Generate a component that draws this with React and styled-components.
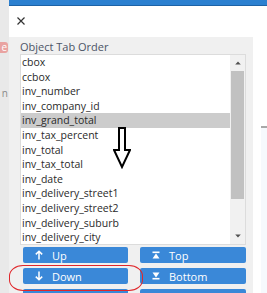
import React from 'react'
import styled, { createGlobalStyle } from 'styled-components'

const fields = [
  'cbox',
  'ccbox',
  'inv_number',
  'inv_company_id',
  'inv_grand_total',
  'inv_tax_percent',
  'inv_total',
  'inv_tax_total',
  'inv_date',
  'inv_delivery_street1',
  'inv_delivery_street2',
  'inv_delivery_suburb',
  'inv_delivery_city',
  'inv_delivery_state',
]

const UpIcon = () => (
  <svg width="8" height="10" viewBox="0 0 8 10">
    <path d="M4 9.5V1.2M0.8 4.4L4 1.2l3.2 3.2" fill="none" stroke="#fff" strokeWidth="1.5" />
  </svg>
)

const DownIcon = () => (
  <svg width="8" height="10" viewBox="0 0 8 10">
    <path d="M4 0.5v8.3M0.8 5.6L4 8.8l3.2-3.2" fill="none" stroke="#fff" strokeWidth="1.5" />
  </svg>
)

const TopIcon = () => (
  <svg width="8" height="8" viewBox="0 0 8 8">
    <rect x="0.5" y="0.5" width="7" height="1.6" fill="#fff" />
    <path d="M4 2.6L7.5 7.5H0.5z" fill="#fff" />
  </svg>
)

const BottomIcon = () => (
  <svg width="8" height="8" viewBox="0 0 8 8">
    <path d="M0.5 0.5h7L4 5.4z" fill="#fff" />
    <rect x="0.5" y="5.9" width="7" height="1.6" fill="#fff" />
  </svg>
)

function App() {
  return (
    <>
      <GlobalStyle />
      <Page>
        <LeftStrip>
          <CutButton>e</CutButton>
          <CutText>n</CutText>
        </LeftStrip>
        <Dialog>
          <TopBar />
          <CloseRow>
            <svg width="8" height="8" viewBox="0 0 8 8">
              <path d="M0.5 0.5l7 7M7.5 0.5l-7 7" stroke="#333" strokeWidth="1.2" />
            </svg>
          </CloseRow>
          <Content>
            <Panel>
              <Label>Object Tab Order</Label>
              <ListBox>
                <Items>
                  {fields.map((f, i) => (
                    <Item key={f} selected={i === 4}>{f}</Item>
                  ))}
                </Items>
                <ScrollBar>
                  <ScrollArrow>
                    <svg width="6" height="4" viewBox="0 0 6 4"><path d="M3 0.5L5.8 3.5H0.2z" fill="#505050" /></svg>
                  </ScrollArrow>
                  <Track>
                    <Thumb />
                  </Track>
                  <ScrollArrow>
                    <svg width="6" height="4" viewBox="0 0 6 4"><path d="M0.2 0.5h5.6L3 3.5z" fill="#505050" /></svg>
                  </ScrollArrow>
                </ScrollBar>
                <BigArrow width="18" height="42" viewBox="0 0 18 42">
                  <path d="M6 1h6v22h5L9 40 1 23h5z" fill="#fff" stroke="#000" strokeWidth="2" />
                </BigArrow>
              </ListBox>
              <Buttons>
                <Button><Ico><UpIcon /></Ico>Up</Button>
                <Button><Ico><TopIcon /></Ico>Top</Button>
                <Button><Ico><DownIcon /></Ico>Down</Button>
                <Button><Ico><BottomIcon /></Ico>Bottom</Button>
                <Button />
                <Button />
                <Circle />
              </Buttons>
            </Panel>
            <Gutter>
              <Ghost />
            </Gutter>
          </Content>
        </Dialog>
      </Page>
    </>
  )
}

export default App

const GlobalStyle = createGlobalStyle`
  html, body {
    margin: 0;
    padding: 0;
    background: #fff;
    overflow: hidden;
  }
  body {
    font-family: "Open Sans", "Noto Sans", sans-serif;
  }
`

const Page = styled.div`
  display: flex;
  width: 267px;
  height: 293px;
  overflow: hidden;
`

const LeftStrip = styled.div`
  width: 9px;
  flex-shrink: 0;
  background: #e9e9e9;
  overflow: hidden;
  padding-top: 42px;
  box-sizing: border-box;
`

const CutButton = styled.div`
  width: 8px;
  height: 11px;
  border-radius: 0 3px 3px 0;
  background: #e9a3a1;
  color: #fff;
  font-size: 10px;
  line-height: 10px;
  text-align: right;
  padding-right: 1px;
  box-sizing: border-box;
`

const CutText = styled.div`
  margin-top: 34px;
  width: 8px;
  font-size: 10px;
  line-height: 12px;
  color: #8a8a8a;
  text-align: right;
`

const Dialog = styled.div`
  flex: 1;
  display: flex;
  flex-direction: column;
  background: #fff;
  min-height: 0;
`

const TopBar = styled.div`
  flex-shrink: 0;
  height: 5px;
  background: #2c80d0;
  border-bottom: 1px solid #1d62a6;
`

const CloseRow = styled.div`
  flex-shrink: 0;
  height: 31px;
  padding: 11px 0 0 8px;
  box-sizing: border-box;
  display: flex;
  align-items: flex-start;
`

const Content = styled.div`
  flex: 1;
  display: flex;
  min-height: 0;
`

const Panel = styled.div`
  width: 244px;
  flex-shrink: 0;
  background: #f0f0f0;
  padding: 2px 7px 0 11px;
  box-sizing: border-box;
`

const Label = styled.div`
  font-size: 11px;
  line-height: 15px;
  color: #4c5466;
`

const ListBox = styled.div`
  position: relative;
  display: flex;
  height: 191px;
  background: #fff;
  border: 1px solid #dcdcdc;
  box-sizing: border-box;
  overflow: hidden;
`

const Items = styled.div`
  flex: 1;
  overflow: hidden;
`

const Item = styled.div`
  height: 14.6px;
  line-height: 14.6px;
  padding-left: 1px;
  font-size: 10.5px;
  color: #2a2a2a;
  white-space: nowrap;
  background: ${p => (p.selected ? '#cccccc' : 'transparent')};
`

const ScrollBar = styled.div`
  width: 15px;
  display: flex;
  flex-direction: column;
  background: #f1f1f1;
`

const ScrollArrow = styled.div`
  height: 16px;
  display: flex;
  align-items: center;
  justify-content: center;
`

const Track = styled.div`
  flex: 1;
  padding-bottom: 29px;
  display: flex;
`

const Thumb = styled.div`
  flex: 1;
  margin: 0 1px;
  background: #c1c1c1;
`

const BigArrow = styled.svg`
  position: absolute;
  left: 92px;
  top: 72px;
`

const Buttons = styled.div`
  position: relative;
  display: grid;
  grid-template-columns: 105px 106px;
  column-gap: 12px;
  row-gap: 5px;
  padding: 2px 0 0 3px;
`

const Button = styled.div`
  height: 16px;
  display: flex;
  align-items: center;
  padding-left: 12px;
  background: #3a88d8;
  border-radius: 2px;
  color: #fff;
  font-size: 11px;
`

const Ico = styled.span`
  display: flex;
  width: 8px;
  margin-right: 9px;
`

const Circle = styled.div`
  position: absolute;
  left: -11px;
  top: 20px;
  width: 134px;
  height: 26px;
  border: 1.5px solid #e0262a;
  border-radius: 14px / 11px;
  box-sizing: border-box;
`

const Gutter = styled.div`
  flex: 1;
  padding: 89px 0 0 8px;
`

const Ghost = styled.div`
  height: 180px;
  border-top: 2px solid #a8a8a8;
  background: #f6f9fd;
`
